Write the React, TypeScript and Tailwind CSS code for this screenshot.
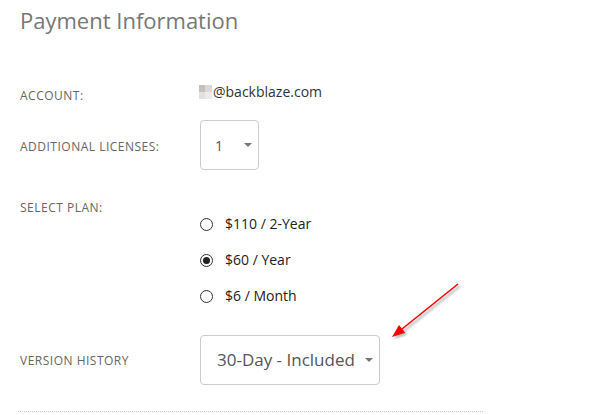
import React from "react";

function Radio({ checked }: { checked?: boolean }) {
  return (
    <span className="flex h-[13px] w-[13px] items-center justify-center rounded-full border border-[#333] bg-white">
      {checked ? <span className="h-[7px] w-[7px] rounded-full bg-[#222]" /> : null}
    </span>
  );
}

function Caret() {
  return (
    <span className="h-0 w-0 border-l-[4px] border-r-[4px] border-t-[4px] border-l-transparent border-r-transparent border-t-[#777]" />
  );
}

export default function App() {
  const font = { fontFamily: '"Open Sans", "Noto Sans", sans-serif' };
  return (
    <div className="relative h-[415px] w-[596px] overflow-hidden bg-white" style={font}>
      <div className="pl-5">
        <h2 className="pt-[5px] text-[22px] font-normal leading-[30px] text-[#777]">Payment Information</h2>

        {/* Account */}
        <div className="mt-[45px] flex h-[24px]">
          <div className="mt-[8px] w-[180px] text-[12px] uppercase leading-[16px] tracking-[0.5px] text-[#666]">Account:</div>
          <div className="ml-[-1px] flex items-center text-[14px] leading-[20px] text-[#333]">
            <span className="mr-[1px] flex">
              <span className="flex flex-col">
                <span className="h-[7px] w-[6px] bg-[#c4c0bb]" />
                <span className="h-[7px] w-[6px] bg-[#e2e1df]" />
              </span>
              <span className="flex flex-col">
                <span className="h-[7px] w-[7px] bg-[#dad9d7]" />
                <span className="h-[7px] w-[7px] bg-[#ecebea]" />
              </span>
            </span>
            <span>@backblaze.com</span>
          </div>
        </div>

        {/* Licenses */}
        <div className="mt-[16px] flex h-[50px]">
          <div className="mt-[19px] w-[180px] text-[12px] uppercase leading-[16px] tracking-[0.5px] text-[#666]">Additional Licenses:</div>
          <div className="flex h-[50px] w-[59px] items-center justify-between rounded-[4px] border border-[#ccc] pl-[14px] pr-[6px] text-[14px] text-[#555]">
            <span>1</span>
            <Caret />
          </div>
        </div>

        {/* Plan */}
        <div className="mt-[30px] flex">
          <div className="w-[180px] text-[12px] uppercase leading-[16px] tracking-[0.5px] text-[#666]">Select Plan:</div>
          <div className="mt-[14px] flex flex-col gap-4 text-[14px] leading-[20px] text-[#222]">
            <label className="flex h-[20px] items-center gap-[12px]">
              <Radio />
              <span>$110 / 2-Year</span>
            </label>
            <label className="flex h-[20px] items-center gap-[12px]">
              <Radio checked />
              <span>$60 / Year</span>
            </label>
            <label className="flex h-[20px] items-center gap-[12px]">
              <Radio />
              <span>$6 / Month</span>
            </label>
          </div>
        </div>

        {/* Version history */}
        <div className="mt-[29px] flex h-[50px]">
          <div className="mt-[18px] w-[180px] text-[12px] uppercase leading-[16px] tracking-[0.5px] text-[#666]">Version History</div>
          <div className="flex h-[50px] w-[180px] items-center justify-between rounded-[4px] border border-[#ccc] pl-[16px] pr-[6px] text-[17px] text-[#555]">
            <span>30-Day - Included</span>
            <Caret />
          </div>
        </div>

        <div className="ml-[-2px] mt-[26px] w-[465px] border-t border-dotted border-[#ccc]" />
      </div>

      <svg className="pointer-events-none absolute left-0 top-0" width="596" height="415" viewBox="0 0 596 415">
        <defs>
          <filter id="sh" x="-20%" y="-20%" width="140%" height="140%">
            <feGaussianBlur stdDeviation="1.2" />
          </filter>
        </defs>
        <g transform="translate(2,2)" opacity="0.45" filter="url(#sh)">
          <line x1="458" y1="284" x2="402" y2="329" stroke="#666" strokeWidth="2" />
          <polygon points="392,337 405.2,332.8 399,325" fill="#666" />
        </g>
        <line x1="458" y1="284" x2="402" y2="329" stroke="#ff0000" strokeWidth="1.6" />
        <polygon points="392,337 405.2,332.8 399,325" fill="#ff0000" />
      </svg>
    </div>
  );
}
